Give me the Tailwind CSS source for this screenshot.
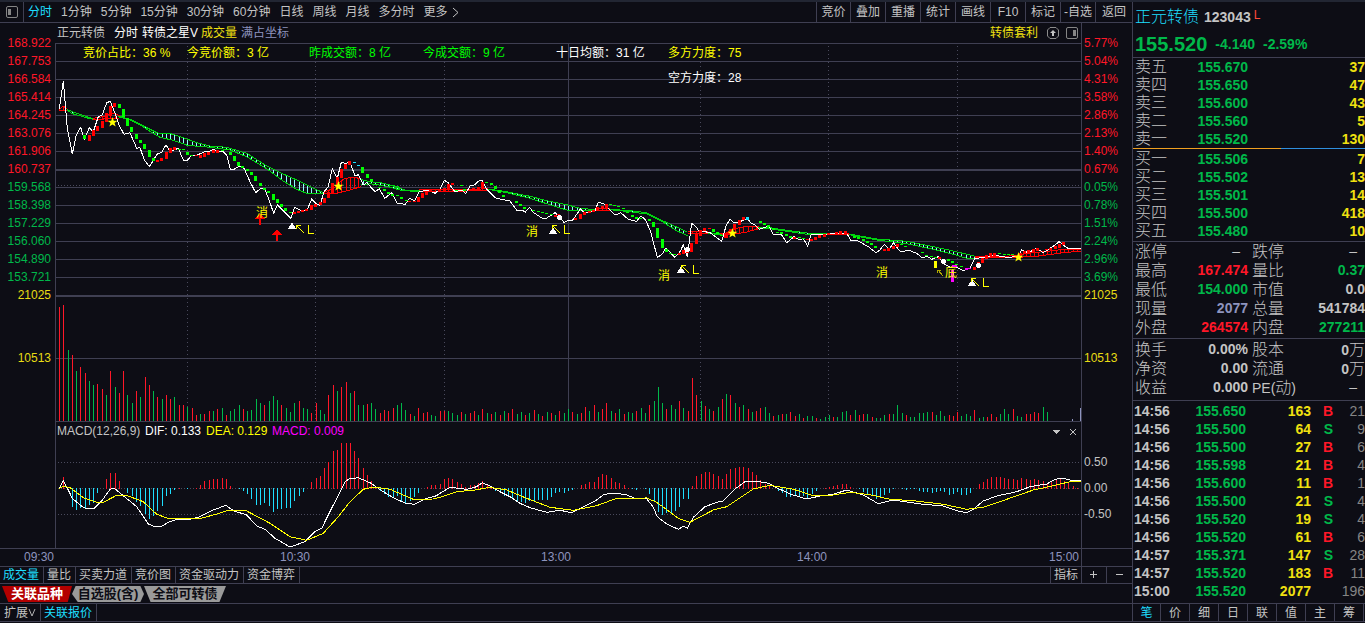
<!DOCTYPE html>
<html lang="zh-CN">
<head>
<meta charset="utf-8">
<meta name="viewport" content="width=device-width, initial-scale=1">
<title>正元转债 123043 分时</title>
<script src="https://cdn.jsdelivr.net/npm/@tailwindcss/browser@4"></script>
</head>
<body class="min-h-screen overflow-x-hidden bg-[#0d0d15] font-['Liberation_Sans','Noto_Sans_CJK_SC',sans-serif] text-[12px] leading-[18px] text-[#c4c4c4]">
<div class="h-[2px] bg-[#222633]"></div>
<div class="flex">
  <main class="flex min-w-0 flex-1 flex-col">
    <header class="flex h-[21px] items-stretch border-b border-[#3f3f52] whitespace-nowrap">
      <button aria-label="侧栏" class="flex w-6 items-center justify-center border-r border-[#3f3f52]">
        <svg width="12" height="12" viewBox="0 0 12 12" fill="none" stroke="#858585"><rect x=".5" y=".5" width="11" height="11" rx="1.5"/><rect x="2" y="3" width="3" height="6" fill="#858585" stroke="none"/></svg>
      </button>
      <nav class="flex items-center gap-[9px] pl-1">
        <button class="text-[#1edfff]">分时</button><button>1分钟</button><button>5分钟</button><button>15分钟</button><button>30分钟</button><button>60分钟</button><button>日线</button><button>周线</button><button>月线</button><button>多分时</button>
        <button class="flex items-center gap-1">更多<svg width="8" height="11" viewBox="0 0 8 11" fill="none" stroke="#c4c4c4"><path d="M1 1l5 4.500l-5 4.500"/></svg></button>
      </nav>
      <div class="ml-auto grid grid-cols-[34px_35px_35px_35px_35px_35px_35px_35px_37px] *:border-l *:border-[#3f3f52]">
        <button>竞价</button><button>叠加</button><button>重播</button><button>统计</button><button>画线</button><button>F10</button><button>标记</button><button>-自选</button><button>返回</button>
      </div>
    </header>

    <section class="grid grid-cols-[55px_minmax(0,1fr)_51px]">
      <div class="pt-[11px] pr-1 text-right text-[#ff1728]">
        <div>168.922</div><div>167.753</div><div>166.584</div><div>165.414</div><div>164.245</div><div>163.076</div><div>161.906</div><div>160.737</div>
        <div class="text-[#00b84a]"><div>159.568</div><div>158.398</div><div>157.229</div><div>156.060</div><div>154.890</div><div>153.721</div></div>
        <div class="text-[#e8dc14]">21025</div>
        <div class="mt-[45px] text-[#e8dc14]">10513</div>
      </div>
      <div class="min-w-0">
        <div class="flex h-5 items-center pr-[3px] pl-[2px] whitespace-nowrap">
          <h1>正元转债</h1>
          <span class="ml-[9px] text-white">分时</span>
          <span class="ml-1 text-white">转债之星V</span>
          <span class="ml-[3px] text-[#f0e010]">成交量</span>
          <span class="ml-1 text-[#8e94be]">满占坐标</span>
          <a href="#" class="ml-auto text-[#f0e010]">转债套利</a>
          <button aria-label="添加" class="ml-[9px]"><svg width="12" height="12" viewBox="0 0 12 12" fill="none" stroke="#8c8c8c"><path d="M3 .5h6l2.500 2.500v6l-2.500 2.500h-6l-2.500-2.500v-6z"/><path d="M6 3l3 3H7v3H5V6H3z" fill="#c4c4c4" stroke="none"/></svg></button>
          <button aria-label="右侧栏" class="ml-[7px]"><svg width="12" height="12" viewBox="0 0 12 12" fill="none" stroke="#858585"><rect x=".5" y=".5" width="11" height="11" rx="1.5"/><rect x="7" y="3" width="3" height="6" fill="#858585" stroke="none"/></svg></button>
        </div>
        <svg id="chart" class="block h-[505px] w-full" viewBox="55 43 1026 505" preserveAspectRatio="none" fill="none" shape-rendering="crispEdges" role="img" aria-label="分时走势、成交量与MACD"></svg>
      </div>
      <div class="border-l border-[#3f3f52] pt-[11px] pl-[2px] text-[#ff1728]">
        <div>5.77%</div><div>5.04%</div><div>4.31%</div><div>3.58%</div><div>2.86%</div><div>2.13%</div><div>1.40%</div><div>0.67%</div>
        <div class="text-[#00b84a]"><div>0.05%</div><div>0.78%</div><div>1.51%</div><div>2.24%</div><div>2.96%</div><div>3.69%</div></div>
        <div class="text-[#e8dc14]">21025</div>
        <div class="mt-[45px] text-[#e8dc14]">10513</div>
        <div class="mt-[86px] space-y-2 text-[#c4c4c4]"><div>0.50</div><div>0.00</div><div>-0.50</div></div>
      </div>
    </section>

    <div class="flex h-[18px] border-t border-[#3f3f52] leading-[16px] text-[#8e94be]">
      <div class="grid flex-1 grid-cols-[256fr_261fr_256fr_252fr_32px] border-r border-[#3f3f52] pl-6">
        <span>09:30</span><span>10:30</span><span>13:00</span><span>14:00</span><span>15:00</span>
      </div>
      <div class="w-[50px]"></div>
    </div>

    <div class="flex h-[17px] items-stretch border-t border-[#3f3f52] leading-[16px] whitespace-nowrap">
      <nav class="flex *:border-r *:border-[#3f3f52] *:pr-1 *:pl-[3px]">
        <button class="text-[#1edfff]">成交量</button><button>量比</button><button>买卖力道</button><button>竞价图</button><button>资金驱动力</button><button>资金博弈</button>
      </nav>
      <div class="ml-auto grid grid-cols-[31px_25px_26px] *:border-l *:border-[#3f3f52]">
        <button>指标</button>
        <button aria-label="放大" class="flex items-center justify-center"><svg width="8" height="8" viewBox="0 0 8 8" stroke="#c4c4c4" shape-rendering="crispEdges"><path d="M0 3.500h7M3.500 0v7"/></svg></button>
        <button aria-label="缩小" class="flex items-center justify-center"><svg width="8" height="8" viewBox="0 0 8 8" stroke="#c4c4c4" shape-rendering="crispEdges"><path d="M0 3.500h7"/></svg></button>
      </div>
    </div>
    <div class="flex h-5 items-start border-t border-[#3f3f52] pt-[2px] pl-[2px] text-[13px] leading-4 font-bold whitespace-nowrap">
      <button class="h-4 w-[70px] bg-[#b40000] text-white [clip-path:polygon(0_0,100%_0,94%_100%,9%_100%)]">关联品种</button>
      <button class="h-4 w-[72px] bg-[#9a9a9a] text-[#0d0d15] [clip-path:polygon(5%_0,95%_0,100%_50%,95%_100%,8%_100%,0_50%)]">自选股(含)</button>
      <button class="h-4 w-[82px] bg-[#9a9a9a] text-[#0d0d15] [clip-path:polygon(0_0,100%_0,92%_100%,8%_100%)]">全部可转债</button>
    </div>
    <div class="flex h-[18px] items-stretch border-t border-[#3f3f52] leading-[18px] whitespace-nowrap *:border-r *:border-[#3f3f52]">
      <button class="flex items-center pr-1 pl-1">扩展<svg width="8" height="8" viewBox="0 0 8 8" fill="none" stroke="#b0b0b0"><path d="M1 0l3 7l3-7"/></svg></button>
      <button class="pr-1 pl-[3px] text-[#1edfff]">关联报价</button>
    </div>
  </main>

  <aside class="w-[233px] shrink-0 overflow-hidden border-l border-[#3f3f52] text-[14px] font-bold whitespace-nowrap">
    <div class="h-[56px] border-b border-[#3f3f52] pt-1 pl-[2px]">
      <div class="flex h-[22px] items-center gap-[5px]"><h2 class="text-[16px] font-light text-[#1edfff]">正元转债</h2><span>123043</span><span class="-ml-[2px] self-start text-[12px] leading-[18px] font-normal text-[#ff4a3a]">L</span></div>
      <div class="flex h-8 items-center gap-2 text-[#00b84a]"><strong class="text-[20px]">155.520</strong><span>-4.140</span><span>-2.59%</span></div>
    </div>
    <table class="w-full table-fixed text-[#00b84a]" data-book="sell"><tbody></tbody></table>
    <div class="flex h-[2px]"><i class="h-px w-[148px] bg-[#f0a020]"></i><i class="h-px flex-1 bg-[#2e8fe0]"></i></div>
    <table class="w-full table-fixed text-[#00b84a]" data-book="buy"><tbody></tbody></table>
    <dl class="mt-px grid grid-cols-[35px_80px_4px_50px_1fr] border-t border-[#3f3f52] pb-px leading-[19px]" data-facts="day"></dl>
    <dl class="grid grid-cols-[35px_80px_4px_50px_1fr] border-t border-[#3f3f52] pt-px pb-[3px] leading-[19px]" data-facts="basic"></dl>
    <div class="border-t border-[#3f3f52] pt-px pb-[3px]">
      <table class="w-full table-fixed text-[#00b84a]" data-ticks><tbody></tbody></table>
    </div>
    <nav class="grid h-[18px] grid-cols-[28px_repeat(7,29px)] border-t border-[#3f3f52] text-[12px] leading-[18px] font-normal *:border-r *:border-[#3f3f52]">
      <button class="text-[#1edfff]">笔</button><button>价</button><button>细</button><button>日</button><button>联</button><button>值</button><button>主</button><button>筹</button>
    </nav>
  </aside>
</div>
<div class="h-px bg-[#3f3f52]"></div>

<script>
// Order book, facts and trade list
const $ = s => document.querySelector(s);
const book = (name, rows) => $(`[data-book=${name}] tbody`).innerHTML = rows.map(([l, p, v]) =>
  `<tr class="h-[18px]"><th class="w-[35px] p-0 pl-[2px] text-left text-[16px] font-light leading-[18px] text-[#c4c4c4]">${l}</th><td class="w-[80px] p-0 text-right leading-[18px]">${p}</td><td class="p-0 text-right leading-[18px] text-[#f0e010]">${v}</td></tr>`).join('');
book('sell', [['卖五','155.670',37],['卖四','155.650',47],['卖三','155.600',43],['卖二','155.560',5],['卖一','155.520',130]]);
book('buy', [['买一','155.506',7],['买二','155.502',13],['买三','155.501',14],['买四','155.500',418],['买五','155.480',10]]);

const tone = { r: 'text-[#ff1728]', g: 'text-[#00b84a]', b: 'text-[#8e94be]', w: '', d: 'pr-2 font-normal' };
const facts = (name, rows) => $(`[data-facts=${name}]`).innerHTML = rows.map(([a, av, at, b, bv, bt]) =>
  `<dt class="h-[19px] pl-[2px] text-[16px] font-light">${a}</dt><dd class="h-[19px] text-right ${tone[at]}">${av}</dd><i></i><dt class="h-[19px] text-[16px] font-light">${b}</dt><dd class="h-[19px] text-right ${tone[bt]}">${bv}</dd>`).join('');
facts('day', [['涨停','–','d','跌停','–','d'],['最高','167.474','r','量比','0.37','g'],['最低','154.000','g','市值','0.0','w'],['现量','2077','b','总量','541784','w'],['外盘','264574','r','内盘','277211','g']]);
facts('basic', [['换手','0.00%','w','股本','0<span class="text-[16px] font-light">万</span>','w'],['净资','0.00','w','流通','0<span class="text-[16px] font-light">万</span>','w'],['收益','0.000','w','<span class="text-[14px] font-normal">PE(</span>动<span class="text-[14px] font-normal">)</span>','–','d']]);

$('[data-ticks] tbody').innerHTML = [
  ['14:56','155.650',163,'B',21],['14:56','155.500',64,'S',9],['14:56','155.500',27,'B',6],['14:56','155.598',21,'B',4],['14:56','155.600',11,'B',1],['14:56','155.500',21,'S',4],['14:56','155.520',19,'S',4],['14:56','155.520',61,'B',6],['14:57','155.371',147,'S',28],['14:57','155.520',183,'B',11],['15:00','155.520',2077,'',196]
].map(([t, p, v, s, n]) => `<tr class="h-[18px]"><td class="w-[45px] p-0 pl-px leading-[18px] text-[#c4c4c4]">${t}</td><td class="w-[68px] p-0 text-right leading-[18px]">${p}</td><td class="w-[65px] p-0 text-right leading-[18px] text-[#f0e010]">${v}</td><td class="w-[22px] p-0 text-right leading-[18px] ${s === 'B' ? 'text-[#ff1728]' : ''}">${s}</td><td class="p-0 text-right leading-[18px] font-normal text-[#858585]">${n}</td></tr>`).join('');

// Chart
const out = [];
const RED = '#ff1728', GREEN = '#00b84a', GRID = '#3f3f52';
const line = (x1, y1, x2, y2, c, extra = '') => out.push(`<path d="M${x1} ${y1}L${x2} ${y2}" stroke="${c}" ${extra}/>`);
const rect = (x, y, w, h, c) => out.push(`<rect x="${x}" y="${y}" width="${w}" height="${h}" fill="${c}"/>`);
const text = (x, y, s, c, size = 12) => out.push(`<text x="${x}" y="${y}" fill="${c}" font-size="${size}">${s}</text>`);
const X = i => Math.round(59 + i * 4.277);

for (let y = 43; y <= 277; y += 18) rect(55, y, 1026, 1, GRID);
rect(55, 169, 1026, 2, GRID); rect(55, 295, 1026, 2, GRID); rect(55, 358, 1026, 1, GRID); rect(55, 421, 1026, 1, GRID);
rect(55, 43, 1, 505, GRID); rect(568, 43, 1, 378, GRID);
[187, 315, 444, 700, 828, 957].forEach(x => line(x + .5, 46, x + .5, 421, '#4a4a5c', 'stroke-dasharray="1 3"'));
[185, 462, 488, 514].forEach(y => line(58, y + .5, 1081, y + .5, '#4a4a5c', 'stroke-dasharray="1 2"'));

// Volume: sign gives the direction
const volume = [114,116,-71,66,-50,54,48,-40,-36,37,32,-26,50,-34,28,50,-26,-18,30,-24,44,36,-30,24,-22,26,22,-24,16,16,-14,13,6,-7,7,10,-10,12,-13,6,-10,-12,-16,12,-10,-11,-22,-18,16,-20,-25,-21,16,-13,-9,-18,20,-13,-12,8,18,-11,-7,26,36,-30,34,39,-28,30,-16,-16,17,-18,-12,8,11,10,13,-16,-18,-11,7,-5,13,8,9,-6,-5,10,10,-10,-8,-6,
9,-7,8,10,-6,12,-8,7,-9,6,-10,8,12,-7,-9,6,-8,11,-7,5,-9,8,-6,10,-8,-12,9,-7,8,14,-10,16,-9,12,18,-10,8,-12,7,-9,-8,10,-13,-8,16,-20,-34,-18,12,-16,-12,20,-13,10,43,26,-20,15,-12,10,-14,22,-27,26,-18,14,-16,12,-9,10,13,-14,
-8,5,-6,7,-7,9,5,-7,3,-5,-5,3,-2,-4,-6,4,-4,-9,-10,6,-11,6,7,-7,4,-3,-3,-6,7,-7,-16,-8,6,-4,-4,-8,-8,-9,9,-6,-10,-5,6,5,9,-5,-7,-5,11,-3,-4,4,7,4,-7,-12,-7,12,-5,-4,7,7,9,8,-14,-9];
volume.forEach((v, i) => rect(X(i), 421 - Math.abs(v), 1, Math.abs(v), v > 0 ? RED : GREEN));
rect(1072, 419, 1, 2, '#8e94be'); rect(1080, 408, 1, 13, '#8e94be');

// MACD histogram
const hist = [0,12,0,-19,-22,-20,-21,-17,-15,-5,0,10,16,16,8,0,-5,-8,-14,-18,-26,-31,-28,-23,-18,-8,-6,-2,1,0,-1,0,1,4,8,9,10,10,11,10,3,0,-1,-3,-6,-11,-17,-17,-15,-18,-24,-21,-21,-20,-20,-13,-8,-4,0,7,11,13,21,27,38,39,46,46,46,38,31,21,14,8,2,-3,-6,-9,-9,-8,-13,-15,-13,-9,-5,0,2,4,4,5,
10,11,10,7,5,2,4,4,6,8,4,1,-3,-5,-8,-9,-10,-13,-14,-15,-13,-13,-12,-12,-12,-9,-5,-4,-5,-3,-2,0,4,5,7,7,12,15,14,11,7,6,4,1,-1,-2,0,-1,-6,-14,-24,-27,-25,-25,-23,-19,-11,-11,3,13,15,17,17,15,13,10,15,20,21,22,22,21,17,14,9,5,4,0,-3,-5,-9,-9,-8,-8,
-8,-11,-6,-3,0,1,2,3,4,5,5,2,0,-1,-4,-7,-8,-11,-9,-7,-5,-1,0,-1,-2,-1,-1,-3,-4,-4,-5,-4,-3,-4,-7,-6,-4,-7,-7,-5,0,5,7,10,12,12,12,11,10,10,9,11,10,9,10,9,8,6,8,10,10,8,6,3,1];
hist.forEach((v, i) => v && rect(X(i), v > 0 ? 489 - v : 488, 1, Math.abs(v), v > 0 ? RED : '#1edfff'));

// Point lists are kept per section: origin in chart units, points in thirds of a unit
const pts = (ox, oy, s) => s.trim().split(/[ ;]+/).map(p => p.split(',').map(Number)).map(([x, y]) => [ox + x / 3, oy + y / 3]);
const poly = (p, c) => out.push(`<polyline points="${p.map(q => q.map(v => v.toFixed(1)).join(',')).join(' ')}" stroke="${c}"/>`);
const at = (p, x) => { for (let i = 1; i < p.length; i++) if (x <= p[i][0]) { const [a, b] = [p[i-1], p[i]]; return a[1] + (b[1] - a[1]) * (x - a[0]) / (b[0] - a[0]); } return p.at(-1)[1]; };
const band = (ox, oy, up, low, c, tick) => {
  const u = pts(ox, oy, up), l = pts(ox, oy, low), x0 = Math.max(u[0][0], l[0][0]), x1 = Math.min(u.at(-1)[0], l.at(-1)[0]);
  for (let i = 0; i < 240; i++) { const x = X(i); if (x >= x0 && x <= x1) { const a = at(u, x), h = at(l, x) - a; if (h > 1) rect(x, a, 1, h, tick); } }
  poly(u, c); poly(l, c);
};
const G = '#00d010', R = '#ff0000', C = '#90ffff';

band(50, 70, '28,118 40,108 52,118', '28,121 52,121', R, R);
band(50, 70, '50,118 67,125 82,130 115,142 135,147', '50,119 67,131 82,135 115,145 135,149', G, C);
band(50, 70, '130,145 160,140 190,130 207,136', '130,150 170,146 207,145', R, R);
band(50, 70, '205,138 240,148 270,162 300,178 325,190 358,190 400,203 440,218 480,228 530,232 590,250 650,288 700,312 740,330 790,355 820,368', '205,140 240,149 270,164 300,184 330,202 370,211 412,226 480,232 540,240 590,260 650,296 700,333 740,358 770,370 820,372', G, C);
band(50, 70, '820,368 850,355 880,328 900,322 932,325', '820,371 862,370 900,360 932,350', R, R);
band(50, 70, '932,328 960,335 1000,340 1050,352', '932,345 960,341 1000,347 1050,357', G, C);
band(380, 160, '60,85 75,90 120,92', '60,90 75,92 120,95', G, C);
band(380, 160, '0,67 35,77 60,85', '0,75 35,83 60,90', G, C);
band(380, 160, '118,90 200,89 225,90 280,88 325,86', '118,95 200,94 325,92', R, R);
band(380, 160, '325,87 380,95 450,109 500,122 560,134 600,145 645,149', '325,88 380,98 450,115 500,131 560,150 620,150 645,150', G, C);
band(380, 160, '645,147 690,145', '645,152 690,152', R, R);
band(380, 160, '690,148 750,152 800,158 850,183 920,215', '690,149 750,155 800,162 850,187 890,212 925,228', G, C);
band(380, 160, '925,214 985,214', '925,220 985,220', R, R);
band(380, 160, '985,218 1025,222', '985,220 1025,225', G, C);
band(720, 190, '0,132 15,130 60,112 95,108 118,110', '0,138 40,133 80,126 120,115', R, R);
band(720, 190, '115,112 150,113 200,121 262,129 325,131', '115,117 150,116 200,124 262,133 325,134', G, C);
band(720, 190, '325,129 388,129', '325,133 388,133', R, R);
band(720, 190, '388,132 470,147 560,154 640,170 700,183 765,199', '388,134 470,150 560,161 640,178 700,193 740,205 765,206', G, C);
band(720, 190, '765,200 820,200 890,197 920,190 990,183 1030,178 1083,178', '765,204 890,202 950,199 1040,187 1083,184', R, R);

poly([
  ...pts(50, 70, '28,118 40,33 52,175 67,252 79,195 92,172 103,208 118,173 130,185 145,140 157,135 170,98 181,94 195,130 207,165 222,193 240,188 260,235 270,233 283,270 298,290 322,252 335,247 348,224 360,245 372,240 385,235 400,270 412,271 424,257 440,256 462,246 480,243 492,238 505,246 520,245 530,255 541,298 552,298 568,289 583,296 600,335 617,368 632,355 645,358 658,392 671,430 682,405 700,422 722,445 734,412 750,420 770,422 785,388 797,400 810,406 822,365 835,350 847,295 862,325 874,277 887,280 900,277 915,318 925,314 940,345 950,338 975,365 988,356'),
  ...pts(380, 160, '14,115 36,98 52,130 76,133 88,115 104,122 118,95 145,90 165,100 180,88 193,61 205,68 225,96 245,90 257,101 270,78 283,75 296,63 307,62 318,85 345,113 360,117 390,123 410,150 425,150 436,156 449,142 461,158 488,176 500,174 525,158 540,170 552,188 565,180 578,180 602,146 613,160 628,155 645,152 655,127 672,132 690,150 706,165 722,158 745,178 770,184 783,168 797,180 812,215 832,292 845,284 858,264 870,277 884,292 900,275 910,255 922,290 935,190 948,200 958,215 975,215 990,218 1025,244'),
  ...pts(720, 190, '18,108 30,87 42,98 60,95 82,85 93,100 105,105 118,118 148,108 160,135 175,132 185,135 200,158 222,140 238,150 250,146 263,168 273,135 300,133 325,132 345,130 380,130 393,152 413,152 445,170 468,188 480,180 493,163 508,178 520,158 540,184 570,182 590,190 605,202 623,200 635,208 655,200 670,220 690,232 705,230 730,242 750,235 765,205 790,203 820,195 860,202 893,200 905,180 925,188 950,175 970,188 990,175 1005,165 1017,155 1030,165 1045,176 1083,176')
], '#ffffff');

// Trend blocks: x, y, height
const blocks = (ox, oy, c, s) => s.trim().split(' ').map(b => b.split(',').map(Number)).forEach(([x, y, h]) => rect(Math.round(ox + x / 3), Math.round(oy + y / 3), 3, Math.max(1, Math.round(h / 3)), c));
const BG = '#00ff00', BR = '#ff0000';
blocks(50, 70, BG, '99,195,12 204,102,12 216,117,25 228,144,23 240,170,15 254,192,15 267,210,8 279,222,15 294,240,21 306,264,9 384,236,3 396,238,4 408,246,9 420,255,3 512,240,3 524,238,4 537,246,9 549,258,14 561,276,12 573,288,6 588,298,6 600,306,9 612,318,15 627,340,10 640,354,6 652,363,6 666,373,17 678,387,12 690,402,8 702,414,9 718,426,4 933,291,17 948,312,12 960,328,10 972,342,4 984,350,4 998,358,3 1010,366,3 1024,374,3 1038,375,3');
blocks(50, 70, BR, '114,195,18 126,180,18 138,168,15 153,153,20 166,128,26 178,108,30 189,98,12 318,270,6 330,265,10 345,246,20 357,234,14 370,232,8 435,256,4 447,255,9 459,249,13 472,245,8 486,240,9 498,240,8 728,426,6 740,423,6 753,420,5 766,417,6 780,405,14 792,402,9 806,397,9 818,384,14 830,366,18 842,338,30 858,321,34 870,296,26 882,282,16 894,273,12');
blocks(50, 70, '#1edfff', '909,276,3 921,285,3');
blocks(380, 160, BG, '9,88,6 21,95,5 34,102,4 48,105,4 60,111,6 74,120,4 225,90,3 239,75,3 250,88,6 316,66,3 329,69,6 341,78,10 353,90,10 366,104,6 404,122,7 417,132,6 430,141,5 457,150,3 470,153,4 483,155,4 496,160,4 509,163,3 686,132,3 699,134,4 712,138,4 725,144,4 738,157,4 752,165,6 765,172,5 778,174,4 804,177,5 816,186,15 828,204,30 843,237,27 855,266,9 868,280,4 880,282,4 996,207,9 1008,217,6 1020,224,4');
blocks(380, 160, BR, '85,123,3 98,124,3 110,110,15 123,100,15 135,92,12 148,90,6 175,88,6 188,84,9 200,72,18 213,69,5 276,85,6 290,80,10 302,66,18 522,165,6 532,162,4 583,174,5 597,162,14 610,157,8 623,153,7 636,150,6 649,142,12 662,138,10 675,132,14 893,279,6 905,270,12 918,262,18 930,249,26 945,222,30 957,210,18 969,205,9 984,204,3 1032,220,14 1042,215,8');
blocks(720, 190, BR, '15,135,9 28,118,15 40,103,18 54,90,15 66,81,10 220,142,5 258,148,3 270,147,6 282,141,9 295,135,9 308,131,9 320,129,6 345,125,8 358,123,10 371,123,9 490,177,5 502,173,8 515,167,8 527,162,8 655,200,5 760,230,8 770,216,14 783,204,14 795,195,12 808,190,10 820,190,8 898,190,12 910,184,10 922,180,10 936,178,8 948,175,8 975,178,4 988,175,6 1002,168,10 1014,162,12 1026,156,8');
blocks(720, 190, BG, '117,93,6 129,100,5 142,106,5 155,115,5 168,125,4 181,126,5 195,132,7 208,138,5 233,142,3 245,143,3 400,138,5 412,142,5 425,148,5 438,153,6 450,160,7 462,168,6 540,162,4 553,167,4 602,186,3 616,195,3 629,198,3 642,200,3 680,207,5 692,213,6 705,222,4 720,228,4 835,190,3 848,192,4 860,193,4 873,193,4');
blocks(720, 190, '#1edfff', '78,81,8');
blocks(720, 190, '#ff00ff', '697,225,6 703,226,6 735,235,7 744,233,4 693,240,35');
rect(934, 261, 3, 7, '#ffff00');

// Signal markers
const star = (x, y) => out.push(`<path transform="translate(${x} ${y})" d="M0-5L1.300-1.300H5L2 1L3.200 4.600L0 2.500L-3.200 4.600L-2 1L-5-1.300H-1.300Z" fill="#ffff00" shape-rendering="auto"/>`);
[[112.5,122],[338.5,186],[732.5,233],[1018.5,257]].forEach(p => star(...p));
[[559.5,217.5],[687.5,249.5],[943.5,261.5],[978.5,265.5]].forEach(([x, y]) => out.push(`<circle cx="${x}" cy="${y}" r="2.600" fill="#fff"/>`));
[[260,213],[277,229]].forEach(([x, y]) => out.push(`<path d="M${x} ${y}l5 6h-4v6h-2v-6h-4z" fill="#ff0000"/>`));
[[292,222],[553,227],[681,266],[972,279]].forEach(([x, y]) => out.push(`<path d="M${x} ${y}l4 7h-8z" fill="#fff"/>`));
[[296,225,307],[552,225,563],[681,265,692],[971,278,982]].forEach(([x, y, lx]) => {
  out.push(`<path d="M${x + .5} ${y + 4}v-3.500h4M${x} ${y}l8 8" stroke="#ffff00"/><path d="M${lx + 1.5} ${y}v8.500h5.500" stroke="#ffff00"/>`);
});
out.push('<path d="M937.500 273v-3h3M938 270l5 6" stroke="#b0a800"/>');
[[256,217],[526,236],[658,280],[876,277]].forEach(([x, y]) => text(x, y, '消', '#ffff00'));
text(945, 277, '底', '#ffff00');

// DIF and DEA
poly([...pts(0, 400, '178,265 190,243 205,270 217,295 240,315 258,326 280,327 305,303 330,268 343,265 370,287 410,320 445,372 465,380 485,379 505,367 530,358 560,360 600,350 640,330 678,316 700,332 740,345 770,378 795,388 825,415 870,441 915,425 945,395 965,385 985,345 1010,295 1035,245 1048,236 1075,233 1110,248 1145,272 1180,293 1217,310 1243,313 1280,295 1310,287'), ...pts(440, 420, '0,220 30,202 80,208 110,200 127,188 150,198 180,215 210,230 240,250 270,263 320,277 360,271 395,278 410,270 430,260 465,243 490,225 510,220 555,223 590,237 620,236 640,262 652,290 680,312 715,328 730,319 742,325 760,292 795,260 830,247 850,243 885,207 915,185 950,184 985,190 1010,203'), ...pts(780, 400, '0,268 30,282 80,297 120,288 160,283 200,270 250,285 295,311 340,300 430,313 490,318 530,332 560,338 580,328 610,303 650,288 710,275 750,260 800,252 825,238 850,235 870,240 903,242')], '#ffffff');
poly([...pts(0, 400, '178,265 190,259 210,263 250,293 290,307 310,307 350,286 385,288 430,305 470,343 510,357 600,356 650,342 685,331 740,333 810,370 870,410 920,421 970,400 1015,350 1050,305 1090,268 1120,261 1170,268 1240,298 1300,297'), ...pts(440, 420, '0,232 50,215 105,210 150,202 200,210 260,235 330,262 400,271 470,257 530,235 620,234 650,247 715,295 750,307 820,270 860,260 940,207 990,196'), ...pts(780, 400, '0,261 40,268 100,287 160,285 210,277 270,284 330,298 400,302 490,313 560,328 610,322 680,298 760,270 820,257 870,245 903,244')], '#ffff00');

// Captions
[[83,57,'竞价占比：36 %','#ffff00'],[187,57,'今竞价额：3 亿','#ffff00'],[309,57,'昨成交额：8 亿','#00ff00'],[423,57,'今成交额：9 亿','#00ff00'],[556,57,'十日均额：31 亿','#ffffff'],[668,57,'多方力度：75','#ffff00'],[668,82,'空方力度：28','#ffffff'],
 [57,435,'MACD(12,26,9)','#c4c4c4'],[145,435,'DIF: 0.133','#ffffff'],[206,435,'DEA: 0.129','#ffff00'],[272,435,'MACD: 0.009','#ff00ff']].forEach(t => text(...t));
out.push('<path d="M1053 430h7l-3.500 4z" fill="#c4c4c4"/><path d="M1070 429l6 6M1076 429l-6 6" stroke="#c4c4c4" shape-rendering="auto"/>');
$('#chart').innerHTML = out.join('');
</script>
</body>
</html>
